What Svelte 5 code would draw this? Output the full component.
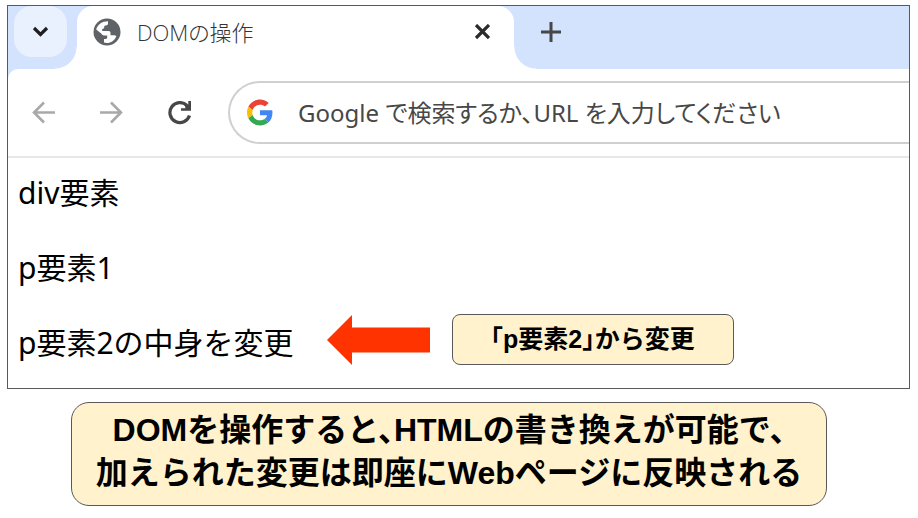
<script>
    const tabTitle = "DOMの操作";
    const elements = ["div要素", "p要素1"];
    const changed = "p要素2の中身を変更";
    const note = "「p要素2」から変更";
    const summary = [
        "DOMを操作すると、HTMLの書き換えが可能で、",
        "加えられた変更は即座にWebページに反映される",
    ];

    let address = $state("");
</script>

<main class="slide">
    <section class="browser">
        <header class="tab-strip">
            <button class="tab-search" aria-label="タブを検索">
                <svg width="20" height="20" viewBox="0 0 20 20">
                    <path
                        d="M3 6l6.500 6.500L16 6"
                        fill="none"
                        stroke="#1f1f1f"
                        stroke-width="3.2"
                    />
                </svg>
            </button>

            <div class="tab">
                <svg class="globe" width="28" height="28" viewBox="0 0 28 28">
                    <circle cx="14" cy="14" r="13.500" fill="#5f6368" />
                    <path
                        d="M3.200 11.500C4.500 6.500 9 3.200 15 3.200V5.500c0 1.200-.8 2-2.200 2-1.300 0-1.600.6-1.600 1.700 0 1-.7 1.600-2 1.700V13H15.500c1.400 0 2 .8 2 2v2.200h3.500c1 0 1.800.3 2.400 1C21.500 22.500 18 25 14 25c-1.200 0-2.200-.2-3-.5V21h1.800c.9 0 1.400-.5 1.400-1.400v-2.200H11c-1.500 0-2-.8-2.800-1.800z"
                        fill="#fff"
                    />
                </svg>
                <span class="tab-title">{tabTitle}</span>
                <button class="tab-close" aria-label="タブを閉じる">
                    <svg width="16" height="16" viewBox="0 0 16 16">
                        <path
                            d="M2 1l13 13M15 1 2 14"
                            stroke="#2b2b2b"
                            stroke-width="3.2"
                        />
                    </svg>
                </button>
            </div>

            <button class="new-tab" aria-label="新しいタブ">
                <svg width="20" height="20" viewBox="0 0 20 20">
                    <path
                        d="M10 0v20M0 10h20"
                        stroke="#474747"
                        stroke-width="3"
                    />
                </svg>
            </button>
        </header>

        <nav class="toolbar">
            <button class="nav-btn" aria-label="戻る">
                <svg width="24" height="24" viewBox="0 0 24 24">
                    <path
                        d="M23 11.500H2.500M12 1.500 2 11.500l10 10"
                        fill="none"
                        stroke="#a9a9a9"
                        stroke-width="2.600"
                    />
                </svg>
            </button>
            <button class="nav-btn" aria-label="進む">
                <svg width="24" height="24" viewBox="0 0 24 24">
                    <path
                        d="M0 11.500h20.500M11 1.500l10 10-10 10"
                        fill="none"
                        stroke="#a9a9a9"
                        stroke-width="2.600"
                    />
                </svg>
            </button>
            <button class="nav-btn" aria-label="再読み込み">
                <svg width="24" height="24" viewBox="0 0 24 24">
                    <path
                        d="M21.500 14.500A10 10 0 1 1 19 4.500"
                        fill="none"
                        stroke="#474747"
                        stroke-width="3.2"
                    />
                    <path
                        d="M20.300 0H23v9.800H13V7.200h4.500L16.800 4.500l3.500-1z"
                        fill="#474747"
                    />
                </svg>
            </button>

            <label class="omnibox">
                <svg width="26" height="27" viewBox="0 0 48 48">
                    <path
                        fill="#ea4335"
                        d="M24 9.500c3.540 0 6.710 1.220 9.210 3.600l6.850-6.850C35.900 2.380 30.470 0 24 0 14.620 0 6.510 5.380 2.560 13.220l7.980 6.190C12.430 13.720 17.740 9.500 24 9.500z"
                    />
                    <path
                        fill="#4285f4"
                        d="M46.980 24.550c0-1.570-.15-3.090-.38-4.550H24v9.020h12.940c-.58 2.960-2.260 5.480-4.780 7.180l7.730 6c4.510-4.180 7.090-10.360 7.090-17.650z"
                    />
                    <path
                        fill="#fbbc05"
                        d="M10.530 28.590c-.48-1.450-.76-2.990-.76-4.590s.27-3.140.76-4.590l-7.980-6.190C.92 16.460 0 20.120 0 24c0 3.880.92 7.540 2.560 10.780l7.970-6.190z"
                    />
                    <path
                        fill="#34a853"
                        d="M24 48c6.480 0 11.930-2.130 15.890-5.810l-7.730-6c-2.150 1.450-4.920 2.300-8.160 2.300-6.260 0-11.570-4.220-13.470-9.910l-7.980 6.190C6.510 42.620 14.620 48 24 48z"
                    />
                </svg>
                <input
                    type="text"
                    aria-label="アドレスバー"
                    placeholder="Google で検索するか、URL を入力してください"
                    bind:value={address}
                />
            </label>
        </nav>

        <div class="page">
            {#each elements as text}
                <p>{text}</p>
            {/each}
            <div class="changed-row">
                <p>{changed}</p>
                <svg class="arrow" width="104" height="50" viewBox="0 0 104 50">
                    <path d="M0 25 25 0v12.500h78v25H25V50z" fill="#ff3300" />
                </svg>
                <strong class="note">{note}</strong>
            </div>
        </div>
    </section>

    <section class="summary">
        {#each summary as line}
            <p>{line}</p>
        {/each}
    </section>
</main>

<style>
    :global(body) {
        background: #fff;
    }

    .slide {
        padding: 5px 8px 12px 7px;
        color: #000;
        font-family: "Noto Sans", "Noto Sans CJK JP", sans-serif;
    }

    p {
        margin: 0;
    }

    button {
        display: flex;
        align-items: center;
        justify-content: center;
        padding: 0;
        border: none;
        background: none;
        cursor: pointer;
    }

    .browser {
        border: 1px solid #595959;
        background: #d3e3fd;
        overflow: hidden;
    }

    .tab-strip {
        display: flex;
        height: 63px;
    }

    .tab-search {
        width: 53px;
        height: 51px;
        margin: 0 10px 0 6px;
        border-radius: 18px;
        background: #e9f1fe;
    }

    .tab {
        position: relative;
        display: flex;
        align-items: center;
        flex: 0 1 437px;
        box-sizing: border-box;
        padding: 0 20px 11px 16px;
        border-radius: 16px 16px 0 0;
        background: #fff;
    }

    /* curved feet that join the active tab to the toolbar */
    .tab::before,
    .tab::after {
        content: "";
        position: absolute;
        bottom: 0;
        width: 22px;
        height: 22px;
    }

    .tab::before {
        right: 100%;
        background: radial-gradient(circle at 0 0, transparent 21px, #fff 22px);
    }

    .tab::after {
        left: 100%;
        background: radial-gradient(
            circle at 100% 0,
            transparent 21px,
            #fff 22px
        );
    }

    .tab-title {
        flex: 1;
        margin-left: 16px;
        color: #333;
        font-family: "Open Sans", "Noto Sans CJK JP", sans-serif;
        font-size: 22px;
        font-weight: 300;
        line-height: 32px;
        font-feature-settings: "palt";
        white-space: nowrap;
    }

    .tab-close {
        width: 24px;
        height: 24px;
    }

    .new-tab {
        width: 40px;
        height: 51px;
        margin-left: 17px;
    }

    .toolbar {
        display: flex;
        align-items: center;
        padding: 12px 0;
        border-bottom: 2px solid #e8e8e8;
        border-top-left-radius: 10px;
        background: #fff;
    }

    .nav-btn {
        flex: none;
        width: 24px;
        height: 40px;
        margin-left: 44px;
    }

    .nav-btn:first-child {
        margin-left: 24px;
    }

    .omnibox {
        display: flex;
        align-items: center;
        flex: 1;
        box-sizing: border-box;
        height: 63px;
        margin-left: 36px;
        padding-left: 17px;
        border: 2px solid #d0d0d0;
        border-right: none;
        border-radius: 32px 0 0 32px;
    }

    .omnibox svg {
        flex: none;
    }

    .omnibox input {
        flex: 1;
        min-width: 0;
        margin-left: 25px;
        padding: 0;
        border: none;
        outline: none;
        background: none;
        color: #474747;
        font-family: "Noto Sans", "Noto Sans CJK JP", sans-serif;
        font-size: 24px;
        line-height: 40px;
        font-feature-settings: "palt";
    }

    .omnibox input::placeholder {
        color: #474747;
        opacity: 1;
    }

    .page {
        padding: 12px 10px 23px;
        background: #fff;
        font-size: 30px;
        line-height: 45px;
    }

    .page > p {
        margin-bottom: 30px;
    }

    .changed-row {
        display: flex;
        align-items: flex-end;
        margin-top: -6px;
    }

    .arrow {
        flex: none;
        margin: 0 21px 0 33px;
    }

    .note {
        flex: 0 1 282px;
        box-sizing: border-box;
        padding: 8px 0;
        border: 1px solid #595959;
        border-radius: 8px;
        background: #fff2cc;
        font-family: "Liberation Sans", "Noto Sans CJK JP", sans-serif;
        font-size: 25px;
        line-height: 33px;
        font-feature-settings: "halt";
        text-align: center;
    }

    .summary {
        box-sizing: border-box;
        margin: 13px 83px 0 64px;
        padding: 6px 0 10px;
        border: 1px solid #595959;
        border-radius: 18px;
        background: #fff2cc;
        font-family: "Liberation Sans", "Noto Sans CJK JP", sans-serif;
        font-size: 32px;
        font-weight: 700;
        line-height: 43px;
        font-feature-settings: "halt";
        text-align: center;
    }
</style>
